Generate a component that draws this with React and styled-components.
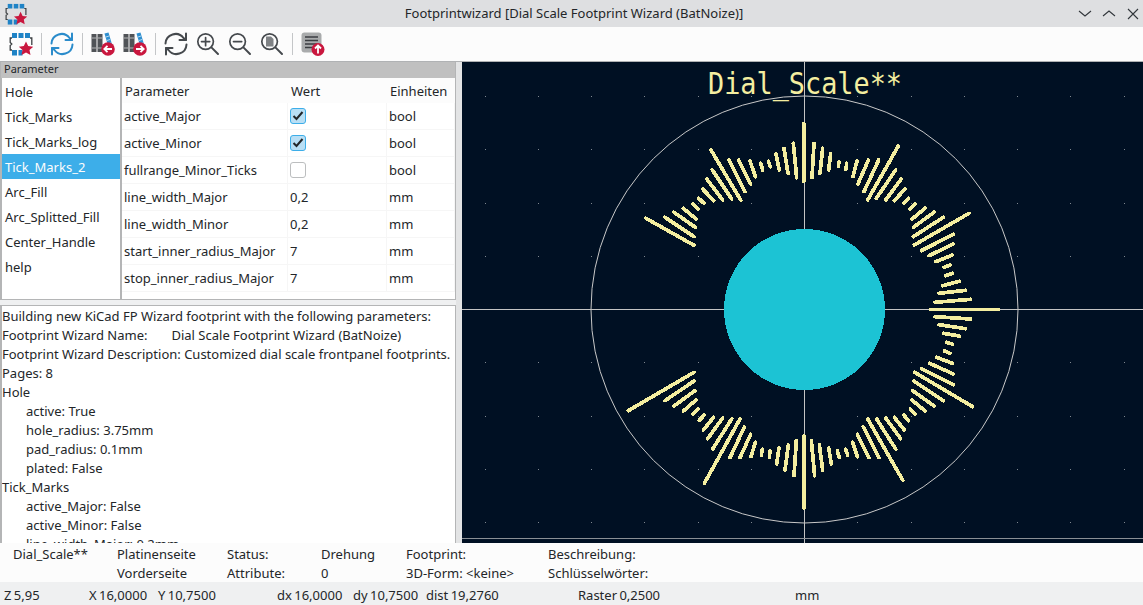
import React from 'react';
import styled, { createGlobalStyle } from 'styled-components';

const GlobalStyle = createGlobalStyle`
  html, body {
    margin: 0;
    padding: 0;
    background: #eff0f1;
  }
  body {
    font-family: "Noto Sans", "Liberation Sans", sans-serif;
    font-size: 13px;
    color: #232629;
    overflow: hidden;
  }
`;

const Window = styled.div`
  width: 1143px;
  height: 605px;
  display: flex;
  flex-direction: column;
  overflow: hidden;
`;

const TitleBar = styled.div`
  height: 27px;
  flex: none;
  background: #dedfe1;
  display: grid;
  grid-template-columns: 1fr auto 1fr;
  align-items: center;
  padding: 0 3px 0 5px;
`;

const TitleText = styled.div`
  line-height: 27px;
  margin-left: 3px;
`;

const WinButtons = styled.div`
  display: flex;
  gap: 10px;
  justify-content: flex-end;
`;

const Toolbar = styled.div`
  height: 35px;
  flex: none;
  background: #fcfcfc;
  border-bottom: 1px solid #b0b2b4;
  box-sizing: border-box;
  display: flex;
  align-items: center;
  padding-left: 9px;
  gap: 8px;
`;

const ToolIcon = styled.svg`
  width: ${({ $size }) => $size || 24}px;
  height: ${({ $size }) => $size || 24}px;
  flex: none;
  display: block;
`;

const ToolSep = styled.div`
  width: 1px;
  height: 22px;
  background: #c4c6c8;
  flex: none;
`;

const Main = styled.div`
  height: 481px;
  flex: none;
  display: flex;
`;

const LeftColumn = styled.div`
  width: 456px;
  flex: none;
  display: flex;
  flex-direction: column;
  gap: 5px;
`;

const ParamPanel = styled.div`
  height: 238px;
  flex: none;
  box-sizing: border-box;
  border: 1px solid #b4b5b6;
  border-top: none;
  border-left-width: 2px;
  display: flex;
  flex-direction: column;
  background: #fcfcfc;
`;

const PanelCaption = styled.div`
  height: 16px;
  flex: none;
  background: #c0c0c0;
  font-size: 11px;
  line-height: 14px;
  padding-left: 3px;
  margin-left: -1px;
`;

const ParamBody = styled.div`
  flex: 1;
  display: flex;
  min-height: 0;
`;

const PageList = styled.div`
  width: 118px;
  flex: none;
  background: #fff;
  border-right: 2px solid #b4b5b6;
  padding-top: 1px;
`;

const PageItem = styled.div`
  height: 25px;
  line-height: 27px;
  padding-left: 3px;
  background: ${({ $selected }) => ($selected ? '#3daee9' : 'transparent')};
  color: ${({ $selected }) => ($selected ? '#fcfcfc' : '#232629')};
`;

const ParamGrid = styled.div`
  flex: 1;
  display: grid;
  grid-template-columns: 166px 99px 1fr;
  grid-template-rows: 25px;
  grid-auto-rows: 27px;
  background: #fff;
`;

const HeadCell = styled.div`
  background: #fcfcfc;
  line-height: 27px;
  padding-left: 3px;
`;

const Cell = styled.div`
  display: flex;
  align-items: center;
  padding-left: 2px;
  box-sizing: border-box;
  border-bottom: 1px solid #f6f6f6;
  border-right: 1px solid #f6f6f6;
`;

const CheckBox = styled.span`
  width: 16px;
  height: 16px;
  box-sizing: border-box;
  border-radius: 3px;
  display: flex;
  align-items: center;
  justify-content: center;
  background: ${({ $on }) => ($on ? '#b9dff5' : '#fff')};
  border: 1px solid ${({ $on }) => ($on ? '#3daee9' : '#bcbebf')};
`;

const LogPanel = styled.div`
  flex: 1;
  min-height: 0;
  box-sizing: border-box;
  border: 1px solid #b4b5b6;
  border-left-width: 2px;
  border-bottom: none;
  background: #fff;
  overflow: hidden;
  padding-top: 1px;
`;

const LogLine = styled.div`
  height: 19px;
  line-height: 19px;
  white-space: pre;
  padding-left: ${({ $indent }) => ($indent ? '24px' : '0')};
`;

const WizardName = styled.span`
  margin-left: 24px;
`;

const Sash = styled.div`
  width: 6px;
  flex: none;
  background: #e3e4e5;
`;

const CanvasArea = styled.svg`
  width: 681px;
  height: 481px;
  flex: none;
  display: block;
  background: #001023;
`;

const MsgPanel = styled.div`
  height: 39px;
  flex: none;
  background: #fcfcfc;
  display: grid;
  grid-template-columns: 104px 110px 94px 85px 142px 1fr;
  grid-template-rows: 19px 19px;
  grid-auto-flow: column;
  padding-left: 13px;
  padding-top: 1px;
  box-sizing: border-box;
`;

const MsgText = styled.div`
  line-height: 19px;
  padding-top: 1px;
  white-space: nowrap;
`;

const StatusBar = styled.div`
  flex: 1;
  background: #eff0f1;
  display: grid;
  grid-template-columns: 85px 69px 119px 76px 73px 152px 217px 1fr;
  padding-left: 4px;
  align-items: center;
  padding-top: 4px;
  word-spacing: -1px;
`;

const StatusText = styled.div`
  white-space: nowrap;
  line-height: 19px;
`;

const pages = ['Hole', 'Tick_Marks', 'Tick_Marks_log', 'Tick_Marks_2', 'Arc_Fill', 'Arc_Splitted_Fill', 'Center_Handle', 'help'];

const rows = [
  ['active_Major', true, 'bool'],
  ['active_Minor', true, 'bool'],
  ['fullrange_Minor_Ticks', false, 'bool'],
  ['line_width_Major', '0,2', 'mm'],
  ['line_width_Minor', '0,2', 'mm'],
  ['start_inner_radius_Major', '7', 'mm'],
  ['stop_inner_radius_Major', '7', 'mm'],
];

const logLines = [
  ['Hole', false],
  ['active: True', true],
  ['hole_radius: 3.75mm', true],
  ['pad_radius: 0.1mm', true],
  ['plated: False', true],
  ['Tick_Marks', false],
  ['active_Major: False', true],
  ['active_Minor: False', true],
  ['line_width_Major: 0.2mm', true],
];

const msgCols = [
  ['Dial_Scale**', ''],
  ['Platinenseite', 'Vorderseite'],
  ['Status:', 'Attribute:'],
  ['Drehung', '0'],
  ['Footprint:', '3D-Form: <keine>'],
  ['Beschreibung:', 'Schlüsselwörter:'],
];

const statusItems = ['Z 5,95', 'X 16,0000', 'Y 10,7500', 'dx 16,0000', 'dy 10,7500', 'dist 19,2760', 'Raster 0,2500', 'mm'];

// tick end points, read from 3x crops of the canvas: x1 y1 x2 y2
const upperTicks = [
  [551,40,551,215],[582,100,576,203],[608,115,600,190],[632,132,626,180],[657,156,655,168],[680,160,678,178],
  [711,153,699,200],[745,150,714,222],[776,150,732,245],[835,108,743,270],[827,180,769,265],[843,208,797,270],
  [855,237,823,272],[865,265,852,280],[885,282,870,297],[915,295,876,327],[942,307,880,352],[970,322,880,380],
  [1047,310,883,405],[1000,373,904,422],[1000,402,927,437],[997,435,948,455],[990,465,972,472],[997,490,977,497],
  [1018,514,968,527],[1036,541,957,550],[1052,568,945,577],
  [222,406,78,325],[222,380,135,322],[226,352,162,307],[228,327,190,295],[234,297,219,283],[252,280,236,265],
  [281,272,248,237],[308,270,261,208],[335,267,277,180],[362,270,273,120],[375,245,327,150],[392,222,356,150],
  [406,200,390,153],[428,180,422,160],[451,170,445,154],[478,180,468,132],[504,190,492,115],[530,203,520,100],
];

const lowerTicks = [
  [1052,57,945,50],[1036,86,957,74],[1018,108,970,100],[997,132,979,127],[990,160,973,153],[997,190,950,172],
  [1000,222,929,190],[1000,254,904,206],[1058,320,884,217],[970,302,881,243],[942,318,878,272],[915,333,876,300],
  [885,342,871,327],[865,362,852,346],[853,390,823,352],[842,416,797,354],[827,447,770,357],[848,540,743,357],
  [777,473,730,381],[747,473,712,403],[712,470,698,427],[683,465,677,448],[658,472,652,453],[634,492,626,444],
  [608,510,598,435],[584,527,574,422],[552,625,552,408],[522,527,529,422],[495,510,505,435],[470,492,477,444],
  [448,472,450,453],[424,465,427,448],[393,470,406,427],[360,473,392,403],[330,473,373,381],[253,550,360,357],
  [278,447,335,357],[263,416,308,354],[250,390,281,352],[238,361,252,346],[219,342,234,327],[190,333,228,300],
  [162,318,225,272],[135,302,222,243],[25,332,222,217],
];

// canvas coordinates: the svg starts at x 462, y 62 of the window
const CX = 342.5;
const CY = 247.5;
const tickLine = (t, oy) => ({
  x1: t[0] / 3 + 158,
  y1: t[1] / 3 + oy,
  x2: t[2] / 3 + 158,
  y2: t[3] / 3 + oy,
});
const ticks = [...upperTicks.map((t) => tickLine(t, 48)), ...lowerTicks.map((t) => tickLine(t, 238))];
ticks.push({ x1: 469, y1: CY, x2: 536, y2: CY });

const gridDots = [];
for (let i = -6; i <= 7; i += 1) {
  for (let j = -4; j <= 5; j += 1) {
    gridDots.push([Math.floor(CX + i * 53.25), Math.floor(CY + j * 53.25)]);
  }
}

const FootprintIcon = ({ size }) => (
  <ToolIcon viewBox="0 0 24 24" $size={size}>
    <g fill="#1f83c6">
      <rect x="3" y="1" width="5" height="5" />
      <rect x="9.5" y="1" width="5" height="5" />
      <rect x="16" y="1" width="5" height="5" />
      <rect x="3" y="18" width="5" height="5.5" />
      <rect x="9.5" y="18" width="4" height="5.5" />
    </g>
    <path d="M3 6H1.2v4.5l1.6 1.5-1.6 1.5V18H3M21 6h1.8v7" fill="none" stroke="#3c4043" strokeWidth="1.3" />
    <path d="M17 9.5l2.2 4.6 5 .6-3.7 3.4 1 5-4.5-2.5-4.5 2.5 1-5-3.7-3.4 5-.6z" fill="#c9173e" />
  </ToolIcon>
);

const SyncIcon = ({ color }) => (
  <ToolIcon viewBox="0 0 24 24" fill="none" stroke={color} strokeWidth="2" strokeLinecap="round" strokeLinejoin="round">
    <path d="M1.5 11.5a10 10 0 0 1 18-5.5l2.5 2" />
    <path d="M22 1.5V8h-6.5" />
    <path d="M22.5 12.5a10 10 0 0 1-18 5.5L2 16" />
    <path d="M2 22.5V16h6.5" />
  </ToolIcon>
);

const LibIcon = ({ flip }) => (
  <ToolIcon viewBox="0 0 24 24">
    <g fill="#505357">
      <rect x="0.5" y="2" width="5" height="18" />
      <rect x="6.5" y="2" width="5" height="18" />
    </g>
    <path d="M1 6h4M7 6h4M1 16h4M7 16h4" stroke="#cfd0d1" strokeWidth="0.8" />
    <path d="M13.5 1.5l4-1 5 17-4 1z" fill="#2f8fd0" />
    <path d="M15 5l3-1M16 8.5l3-1M17 12l3-1" stroke="#d9ecf8" strokeWidth="0.8" />
    <circle cx="17" cy="17" r="6.8" fill="#c9173e" />
    <path
      d={flip ? 'M13 17h7.5M17.5 13.8l3.2 3.2-3.2 3.2' : 'M21 17h-7.5M16.5 13.8L13.3 17l3.2 3.2'}
      fill="none"
      stroke="#fff"
      strokeWidth="1.8"
    />
  </ToolIcon>
);

const ZoomIcon = ({ children }) => (
  <ToolIcon viewBox="0 0 24 24" fill="none" stroke="#45494d" strokeWidth="1.7" strokeLinecap="round">
    <circle cx="9.6" cy="9.6" r="7.8" />
    <path d="M15.4 15.4l6.6 6.6" strokeWidth="2" />
    {children}
  </ToolIcon>
);

const ExportIcon = () => (
  <ToolIcon viewBox="0 0 24 24">
    <rect x="0.5" y="0.5" width="20" height="20" rx="3" fill="#a9abac" />
    <path d="M4 5h13M4 8.5h13M4 12h12M4 15.5h9" stroke="#3b3e41" strokeWidth="1.4" />
    <circle cx="17" cy="17.5" r="6.5" fill="#c9173e" />
    <path d="M17 21.5v-7.5M14 16.5l3-3 3 3" fill="none" stroke="#fff" strokeWidth="1.8" />
  </ToolIcon>
);

const WinIcon = ({ d }) => (
  <svg width="14" height="14" viewBox="0 0 14 14" fill="none" stroke="#31363b" strokeWidth="1.1">
    <path d={d} />
  </svg>
);

const CheckMark = () => (
  <svg width="12" height="10" viewBox="0 0 12 10" fill="none" stroke="#232629" strokeWidth="2">
    <path d="M1.5 5l3 3 6-7" />
  </svg>
);

const Canvas = () => (
  <CanvasArea viewBox="0 0 681 481">
    <g fill="#7f878f">
      {gridDots.map(([x, y]) => (
        <rect key={`${x}-${y}`} x={x} y={y} width="1" height="1" />
      ))}
    </g>
    <circle cx={CX} cy={CY} r="213.5" fill="none" stroke="#c8c8c8" strokeWidth="1" />
    <path d={`M0 ${CY}H681M${CX} 0V481`} stroke="#c4c4c4" strokeWidth="1" />
    <path d="M0 476.5H681" stroke="#8a8f94" strokeWidth="1" />
    <circle cx={CX} cy={CY} r="80.5" fill="#1cc3d4" shapeRendering="crispEdges" />
    <g stroke="#f4eea0" strokeWidth="3.7" strokeLinecap="round" shapeRendering="crispEdges">
      {ticks.map((t) => (
        <line key={`${t.x1}-${t.y1}`} {...t} />
      ))}
    </g>
    <text
      x="246"
      y="32"
      textLength="194"
      lengthAdjust="spacingAndGlyphs"
      fill="#f4eea0"
      fontFamily="'DejaVu Sans Mono', monospace"
      fontSize="31"
    >
      Dial_Scale**
    </text>
  </CanvasArea>
);

const App = () => (
  <Window>
    <GlobalStyle />
    <TitleBar>
      <FootprintIcon size={22} />
      <TitleText>Footprintwizard [Dial Scale Footprint Wizard (BatNoize)]</TitleText>
      <WinButtons>
        <WinIcon d="M1 4l6 5 6-5" />
        <WinIcon d="M1 9l6-5 6 5" />
        <WinIcon d="M2 2l10 10M12 2L2 12" />
      </WinButtons>
    </TitleBar>
    <Toolbar>
      <FootprintIcon />
      <ToolSep />
      <SyncIcon color="#2b8ccb" />
      <ToolSep />
      <LibIcon />
      <LibIcon flip />
      <ToolSep />
      <SyncIcon color="#45494d" />
      <ZoomIcon>
        <path d="M9.6 5.5v8.2M5.5 9.6h8.2" />
      </ZoomIcon>
      <ZoomIcon>
        <path d="M5.5 9.6h8.2" />
      </ZoomIcon>
      <ZoomIcon>
        <path d="M6 4.5h5l2.5 2.5v7.5H6z" fill="#7f8285" stroke="none" />
      </ZoomIcon>
      <ToolSep />
      <ExportIcon />
    </Toolbar>
    <Main>
      <LeftColumn>
        <ParamPanel>
          <PanelCaption>Parameter</PanelCaption>
          <ParamBody>
            <PageList>
              {pages.map((p) => (
                <PageItem key={p} $selected={p === 'Tick_Marks_2'}>
                  {p}
                </PageItem>
              ))}
            </PageList>
            <ParamGrid>
              <HeadCell>Parameter</HeadCell>
              <HeadCell>Wert</HeadCell>
              <HeadCell>Einheiten</HeadCell>
              {rows.map(([name, value, unit]) => (
                <React.Fragment key={name}>
                  <Cell>{name}</Cell>
                  <Cell>
                    {typeof value === 'boolean' ? <CheckBox $on={value}>{value && <CheckMark />}</CheckBox> : value}
                  </Cell>
                  <Cell>{unit}</Cell>
                </React.Fragment>
              ))}
            </ParamGrid>
          </ParamBody>
        </ParamPanel>
        <LogPanel>
          <LogLine>Building new KiCad FP Wizard footprint with the following parameters:</LogLine>
          <LogLine>
            Footprint Wizard Name:<WizardName>Dial Scale Footprint Wizard (BatNoize)</WizardName>
          </LogLine>
          <LogLine>Footprint Wizard Description: Customized dial scale frontpanel footprints.</LogLine>
          <LogLine>Pages: 8</LogLine>
          {logLines.map(([text, indent]) => (
            <LogLine key={text} $indent={indent}>
              {text}
            </LogLine>
          ))}
        </LogPanel>
      </LeftColumn>
      <Sash />
      <Canvas />
    </Main>
    <MsgPanel>
      {msgCols.flat().map((text, i) => (
        <MsgText key={i}>{text}</MsgText>
      ))}
    </MsgPanel>
    <StatusBar>
      {statusItems.map((s) => (
        <StatusText key={s}>{s}</StatusText>
      ))}
    </StatusBar>
  </Window>
);

export default App;
